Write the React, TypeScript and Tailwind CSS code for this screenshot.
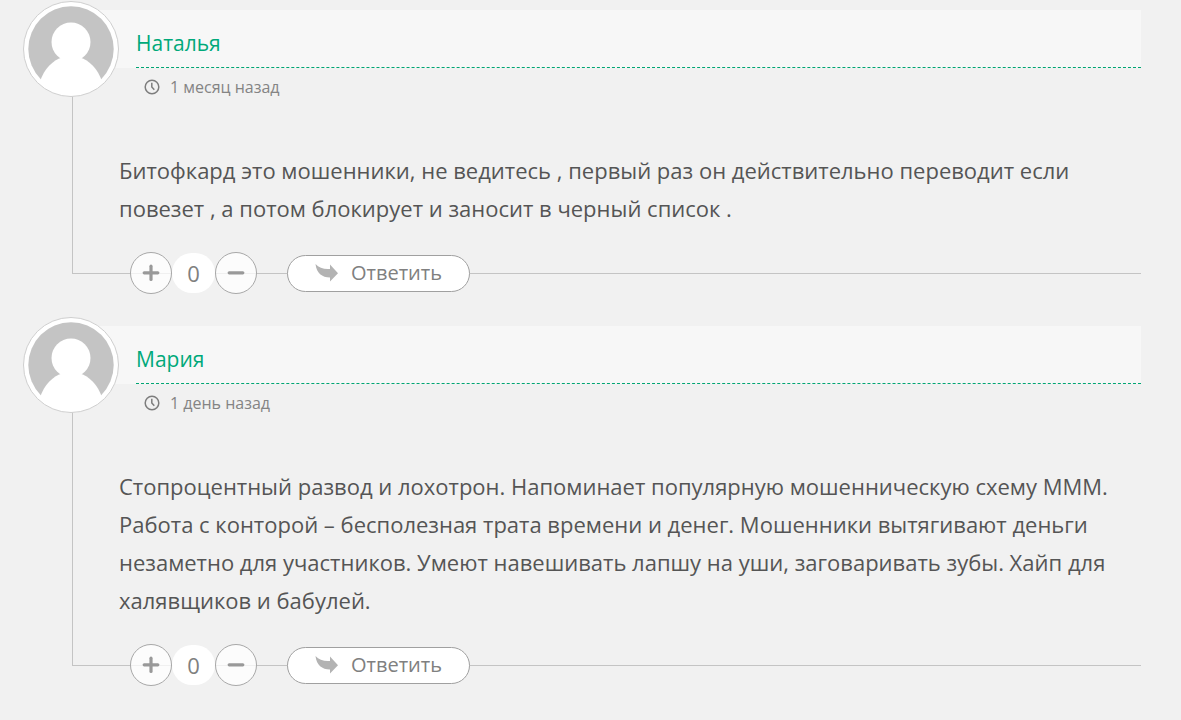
type Comment = {
  id: number;
  author: string;
  date: string;
  text: string;
  votes: number;
};

const comments: Comment[] = [
  {
    id: 1,
    author: "Наталья",
    date: "1 месяц назад",
    text: "Битофкард это мошенники, не ведитесь , первый раз он действительно переводит если повезет , а потом блокирует и заносит в черный список .",
    votes: 0,
  },
  {
    id: 2,
    author: "Мария",
    date: "1 день назад",
    text: "Стопроцентный развод и лохотрон. Напоминает популярную мошенническую схему МММ. Работа с конторой – бесполезная трата времени и денег. Мошенники вытягивают деньги незаметно для участников. Умеют навешивать лапшу на уши, заговаривать зубы. Хайп для халявщиков и бабулей.",
    votes: 0,
  },
];

function Avatar() {
  return (
    <div className="absolute -top-[9px] -left-[50px] size-24 rounded-full border border-[#cfcfcf] bg-white p-1">
      <svg viewBox="0 0 86 86" className="size-full overflow-visible" aria-hidden="true">
        <circle cx="43" cy="43" r="42.7" fill="#c4c4c4" />
        <circle cx="43" cy="36" r="19.5" fill="#fff" />
        <path d="M12 75.5C16 63 25 54 34 51.5H52C61 54 70 63 74 75.5A45 45 0 0 1 12 75.5Z" fill="#fff" />
      </svg>
    </div>
  );
}

function ClockIcon() {
  return (
    <svg viewBox="0 0 16 16" className="size-4" fill="none" stroke="#7d7d7d" strokeWidth="1.5" aria-hidden="true">
      <circle cx="8" cy="8" r="6.8" />
      <path d="M7.8 3.8V8L10.3 10.8" />
    </svg>
  );
}

function VoteButton({ label, plus }: { label: string; plus?: boolean }) {
  return (
    <button
      type="button"
      aria-label={label}
      className="flex size-[42px] items-center justify-center rounded-full border border-[#a8a8a8] bg-white/75"
    >
      <svg viewBox="0 0 18 18" className="size-[18px]" stroke="#999" strokeWidth="3.2" strokeLinecap="round" aria-hidden="true">
        <path d="M2.2 8.8H15.8" />
        {plus && <path d="M9 2.2V15.4" />}
      </svg>
    </button>
  );
}

function CommentItem({ comment }: { comment: Comment }) {
  return (
    <article>
      {/* Header and text, framed by the thread line */}
      <div className="relative border-b border-l border-[#c4c4c4] pb-[46px]">
        <header className="bg-[#f7f7f7] pl-[63px]">
          <div className="flex h-[58px] items-center border-b border-dashed border-[#00a573] pt-2">
            <a href="#author" className="text-[21px] leading-8 text-[#00a97a]">
              {comment.author}
            </a>
          </div>
        </header>
        <Avatar />
        <div className="flex h-[38px] items-center gap-[10px] pl-[71px] text-base text-[#848484]">
          <ClockIcon />
          <time>{comment.date}</time>
        </div>
        <p className="mt-[45px] pl-[46px] text-[22px] leading-[38px] text-[#555]">{comment.text}</p>
      </div>

      {/* Controls sit on the thread line */}
      <footer className="relative -mt-[22px] flex items-center pl-[58px] text-[#808080]">
        <VoteButton label="Нравится" plus />
        <span className="flex h-10 w-[43px] items-center justify-center rounded-full bg-white text-[22px]">
          {comment.votes}
        </span>
        <VoteButton label="Не нравится" />
        <button
          type="button"
          className="ml-[30px] flex h-[37px] w-[183px] items-center justify-center gap-3 rounded-full border border-[#a0a0a0] bg-white text-xl"
        >
          <svg viewBox="0 0 24 20" className="h-5 w-6" fill="#b3b3b3" aria-hidden="true">
            <path d="M0.5 1C4 5 9 6.5 15 6V1.5L23 10.2L15 18.5V14.5C7 14.5 1.5 10 0.5 1Z" />
          </svg>
          Ответить
        </button>
      </footer>
    </article>
  );
}

export default function App() {
  return (
    <main className="flex min-h-screen flex-col gap-8 bg-[#f1f1f1] pt-[10px] pr-10 pb-8 pl-[72px] font-['Open_Sans','Noto_Sans',sans-serif]">
      {comments.map((comment) => (
        <CommentItem key={comment.id} comment={comment} />
      ))}
    </main>
  );
}
